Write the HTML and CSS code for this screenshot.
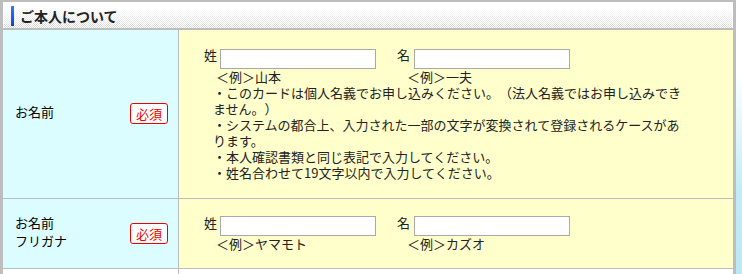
FILE: index.html
```html
<!doctype html>
<html>
<head>
	<meta charset="UTF-8">
	<title>ご本人について</title>
    <link rel="stylesheet" href="styles.css">
</head>
<body>
    <div class="sec">
        <h2 class="sec-title"><span class="sec-bar"></span>ご本人について</h2>
        <table class="form">
            <tr>
                <th>
                    <div class="th-box">
                        <span class="th-label">お名前</span>
                        <em class="req">必須</em>
                    </div>
                </th>
                <td>
                    <div class="name-row">
                        <div class="name-field">姓<input type="text" class="ipt"><br><span class="eg">＜例＞山本</span></div>
                        <div class="name-field">名<input type="text" class="ipt"><br><span class="eg">＜例＞一夫</span></div>
                    </div>
                    <ul class="notes">
                        <li>・このカードは個人名義でお申し込みください。（法人名義ではお申し込みできません。）</li>
                        <li>・システムの都合上、入力された一部の文字が変換されて登録されるケースがあります。</li>
                        <li>・本人確認書類と同じ表記で入力してください。</li>
                        <li>・姓名合わせて19文字以内で入力してください。</li>
                    </ul>
                </td>
            </tr>
            <tr>
                <th>
                    <div class="th-box">
                        <span class="th-label">お名前<br>フリガナ</span>
                        <em class="req">必須</em>
                    </div>
                </th>
                <td>
                    <div class="name-row">
                        <div class="name-field">姓<input type="text" class="ipt"><br><span class="eg">＜例＞ヤマモト</span></div>
                        <div class="name-field">名<input type="text" class="ipt"><br><span class="eg">＜例＞カズオ</span></div>
                    </div>
                </td>
            </tr>
            <tr class="blank">
                <th></th>
                <td></td>
            </tr>
        </table>
    </div>
</body>
</html>
```

FILE: styles.css
```css
/* reset */
body,h1,h2,h3,p,ul,li,input,table,th,td{margin:0;padding:0;}
*{box-sizing:border-box;}
ul{list-style:none;}
em{font-style:normal;}
body{font:13px/16px "Noto Sans CJK JP", "Liberation Sans", sans-serif; color:#222; text-spacing-trim:space-all; background:linear-gradient(180deg, #fff 0, #fff 70px, #c4ebf5 190px, #b8e7f3 100%); min-height:274px;}

/* section */
.sec{width:736px; border:3px solid #bdbdbd; border-top-width:2px; border-bottom:0;}
.sec-title{display:flex; align-items:center; height:26px; border:1px solid #fff; border-bottom:0; padding-left:7px; font-size:14px; font-weight:bold; color:#222;
    background:linear-gradient(180deg, rgba(255,255,255,1) 15%, rgba(255,255,255,.35) 100%), repeating-conic-gradient(#c9c9c9 0 25%, #fff 0 50%) 0 0/2px 2px;}
.sec-bar{width:3px; height:20px; margin-right:6px; background:linear-gradient(180deg, #2d7bff, #0046e8);}

/* form table */
.form{width:730px; border-spacing:0; border-top:2px solid #bdbdbd;}
.form th{width:176px; padding:0 10px 0 12px; background:#dcfdff; border-right:1px solid #bdbdbd; font-weight:normal; color:#000; text-align:left;}
.form td{padding:17px 10px 17px 25px; background:#ffffcc; vertical-align:top;}
.form tr + tr th,
.form tr + tr td{border-top:1px solid #bdbdbd;}
.form tr + tr td{padding-top:16px; padding-bottom:16px;}
.th-box{display:flex; align-items:center; justify-content:space-between; line-height:18px;}
.th-label{margin-top:-3px;}
.req{display:block; width:38px; height:21px; border:1px solid #ee0000; border-radius:3px; background:#fff; color:#ee0000; font-size:13px; line-height:19px; text-align:center;}
.form .blank th,
.form .blank td{height:40px; padding:0; background:#fff;}

/* name inputs */
.name-row{display:flex; gap:21px;}
.name-field{line-height:16px;}
.name-field + .name-field .ipt{margin-left:4px;}
.name-field + .name-field .eg{padding-left:10px;}
.eg{padding-left:12px;}
.ipt{width:156px; height:20px; margin-left:3px; border:1px solid #a9a9a9; background:#fff; vertical-align:-4px; font:13px "Noto Sans CJK JP", sans-serif;}
.notes{width:472px; margin-left:9px;}
```
